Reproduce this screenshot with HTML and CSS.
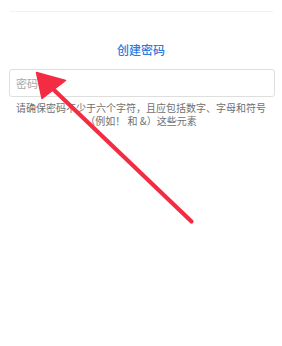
FILE: index.html
```html
<!DOCTYPE html>
<html lang="zh">
<head>
    <meta charset="UTF-8">
    <title>创建密码</title>
    <link rel="stylesheet" href="styles.css">
</head>
<body>
    <div class="page">
        <div class="topline"></div>
        <h1 class="title">创建密码</h1>
        <div class="field">
            <input type="password" placeholder="密码">
        </div>
        <p class="hint">请确保密码不少于六个字符，且应包括数字、字母和符号<br>（例如！ 和 &amp;）这些元素</p>

        <svg class="arrow" width="282" height="346" viewBox="0 0 282 346">
            <line x1="191.5" y1="221.5" x2="54" y2="90" stroke="#f42c43" stroke-width="4.2" stroke-linecap="round"/>
            <polygon points="36.5,72.5 42,98.5 65.5,80.5" fill="#f42c43" stroke="#f42c43" stroke-width="1.5" stroke-linejoin="round"/>
        </svg>
    </div>
</body>
</html>
```

FILE: styles.css
```css
body {
    margin: 0;
    background-color: #fff;
    font-family: "Noto Sans CJK SC", "Noto Sans", sans-serif;
}

.page {
    position: relative;
    width: 282px;
    height: 346px;
    overflow: hidden;
    display: flex;
    flex-direction: column;
}

.topline {
    height: 1px;
    margin: 11px 9px 0 10px;
    background-color: #f2f2f2;
}

.title {
    margin: 30px 0 0;
    font-size: 12px;
    line-height: 16px;
    font-weight: 500;
    text-align: center;
    color: #2c7be0;
}

.field {
    margin: 11px 7px 0 9px;
}

.field input {
    box-sizing: border-box;
    width: 100%;
    height: 28px;
    padding: 0 6px;
    border: 1px solid #dedede;
    border-radius: 3px;
    font-family: inherit;
    font-size: 11px;
    outline: none;
}

.field input::placeholder {
    color: #a9a9a9;
}

.hint {
    margin: 4px 0 0;
    font-size: 10px;
    line-height: 13px;
    text-align: center;
    color: #707070;
}

.arrow {
    position: absolute;
    left: 0;
    top: 0;
}
```
